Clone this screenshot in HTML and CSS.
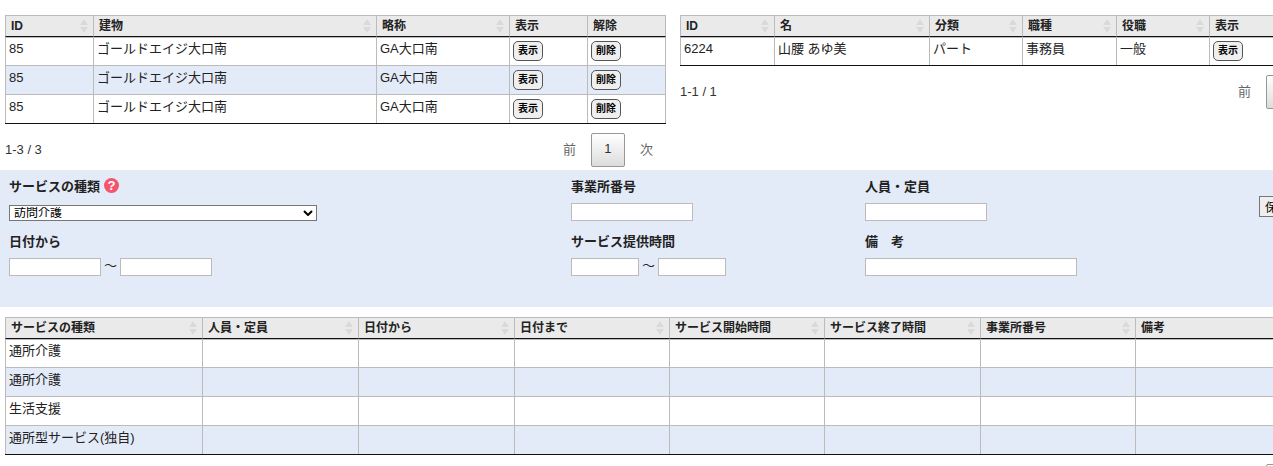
FILE: index.html
```html
<!DOCTYPE html>
<html lang="ja">
<head>
    <meta charset="UTF-8">
    <meta name="viewport" content="width=device-width, initial-scale=1.0">
    <title>サービス登録</title>
    <link rel="stylesheet" href="styles.css">
</head>
<body>

<svg class="sprite" aria-hidden="true">
    <symbol id="sort" viewBox="0 0 8 14">
        <path d="M4 0 L8 6 H0 Z M0 8 H8 L4 14 Z"/>
    </symbol>
</svg>

<div class="page">
    <div class="panes">
        <!-- 建物一覧 -->
        <div class="pane">
            <table class="list building-list">
                <thead>
                    <tr>
                        <th class="col-id"><div class="head">ID<svg class="sort"><use href="#sort"/></svg></div></th>
                        <th class="col-building"><div class="head">建物<svg class="sort"><use href="#sort"/></svg></div></th>
                        <th class="col-short"><div class="head">略称<svg class="sort"><use href="#sort"/></svg></div></th>
                        <th class="col-show"><div class="head">表示</div></th>
                        <th class="col-remove"><div class="head">解除</div></th>
                    </tr>
                </thead>
                <tbody>
                    <tr>
                        <td>85</td>
                        <td>ゴールドエイジ大口南</td>
                        <td>GA大口南</td>
                        <td><button type="button" class="btn">表示</button></td>
                        <td><button type="button" class="btn">削除</button></td>
                    </tr>
                    <tr>
                        <td>85</td>
                        <td>ゴールドエイジ大口南</td>
                        <td>GA大口南</td>
                        <td><button type="button" class="btn">表示</button></td>
                        <td><button type="button" class="btn">削除</button></td>
                    </tr>
                    <tr>
                        <td>85</td>
                        <td>ゴールドエイジ大口南</td>
                        <td>GA大口南</td>
                        <td><button type="button" class="btn">表示</button></td>
                        <td><button type="button" class="btn">削除</button></td>
                    </tr>
                </tbody>
            </table>
            <div class="pager">
                <span class="pager-info">1-3 / 3</span>
                <button type="button" class="page-btn">前</button>
                <button type="button" class="page-btn current">1</button>
                <button type="button" class="page-btn">次</button>
            </div>
        </div>

        <!-- 職員一覧 -->
        <div class="pane">
            <table class="list staff-list">
                <thead>
                    <tr>
                        <th class="col-id"><div class="head">ID<svg class="sort"><use href="#sort"/></svg></div></th>
                        <th class="col-name"><div class="head">名<svg class="sort"><use href="#sort"/></svg></div></th>
                        <th class="col-class"><div class="head">分類<svg class="sort"><use href="#sort"/></svg></div></th>
                        <th class="col-job"><div class="head">職種<svg class="sort"><use href="#sort"/></svg></div></th>
                        <th class="col-post"><div class="head">役職<svg class="sort"><use href="#sort"/></svg></div></th>
                        <th class="col-show"><div class="head">表示</div></th>
                    </tr>
                </thead>
                <tbody>
                    <tr>
                        <td>6224</td>
                        <td>山腰 あゆ美</td>
                        <td>パート</td>
                        <td>事務員</td>
                        <td>一般</td>
                        <td><button type="button" class="btn">表示</button></td>
                    </tr>
                </tbody>
            </table>
            <div class="pager">
                <span class="pager-info">1-1 / 1</span>
                <button type="button" class="page-btn">前</button>
                <button type="button" class="page-btn current">1</button>
                <button type="button" class="page-btn">次</button>
            </div>
        </div>
    </div>

    <!-- 入力フォーム -->
    <form class="service-form">
        <div class="field">
            <div class="label-row">
                <label for="service_type">サービスの種類</label>
                <svg class="help" viewBox="0 0 16 16" role="img" aria-label="ヘルプ">
                    <circle cx="8" cy="8" r="8"/>
                    <text x="8" y="13" text-anchor="middle">?</text>
                </svg>
            </div>
            <div class="control">
                <div class="select-box">
                    <select id="service_type" class="service-type">
                        <option>訪問介護</option>
                        <option>通所介護</option>
                        <option>生活支援</option>
                    </select>
                    <svg class="arrow" viewBox="0 0 10 6" aria-hidden="true"><path d="M1 1 L5 5 L9 1"/></svg>
                </div>
            </div>
        </div>
        <div class="field">
            <div class="label-row"><label for="office_no">事業所番号</label></div>
            <div class="control"><input type="text" id="office_no" class="w-medium"></div>
        </div>
        <div class="field">
            <div class="label-row"><label for="capacity">人員・定員</label></div>
            <div class="control"><input type="text" id="capacity" class="w-medium"></div>
        </div>
        <div class="save">
            <button type="submit" class="save-btn">保存</button>
        </div>
        <div class="field">
            <div class="label-row"><label for="date_from">日付から</label></div>
            <div class="control">
                <input type="text" id="date_from" class="w-date">
                <span>～</span>
                <input type="text" id="date_to" class="w-date" aria-label="日付まで">
            </div>
        </div>
        <div class="field">
            <div class="label-row"><label for="time_from">サービス提供時間</label></div>
            <div class="control">
                <input type="text" id="time_from" class="w-time">
                <span>～</span>
                <input type="text" id="time_to" class="w-time" aria-label="サービス終了時間">
            </div>
        </div>
        <div class="field">
            <div class="label-row"><label for="note">備　考</label></div>
            <div class="control"><input type="text" id="note" class="w-note"></div>
        </div>
    </form>

    <!-- サービス一覧 -->
    <div class="services">
        <table class="list service-list">
            <thead>
                <tr>
                    <th class="col-type"><div class="head">サービスの種類<svg class="sort"><use href="#sort"/></svg></div></th>
                    <th class="col-std"><div class="head">人員・定員<svg class="sort"><use href="#sort"/></svg></div></th>
                    <th class="col-std"><div class="head">日付から<svg class="sort"><use href="#sort"/></svg></div></th>
                    <th class="col-time"><div class="head">日付まで<svg class="sort"><use href="#sort"/></svg></div></th>
                    <th class="col-time"><div class="head">サービス開始時間<svg class="sort"><use href="#sort"/></svg></div></th>
                    <th class="col-std"><div class="head">サービス終了時間<svg class="sort"><use href="#sort"/></svg></div></th>
                    <th class="col-time"><div class="head">事業所番号<svg class="sort"><use href="#sort"/></svg></div></th>
                    <th class="col-note"><div class="head">備考<svg class="sort"><use href="#sort"/></svg></div></th>
                </tr>
            </thead>
            <tbody>
                <tr><td>通所介護</td><td></td><td></td><td></td><td></td><td></td><td></td><td></td></tr>
                <tr><td>通所介護</td><td></td><td></td><td></td><td></td><td></td><td></td><td></td></tr>
                <tr><td>生活支援</td><td></td><td></td><td></td><td></td><td></td><td></td><td></td></tr>
                <tr><td>通所型サービス(独自)</td><td></td><td></td><td></td><td></td><td></td><td></td><td></td></tr>
            </tbody>
        </table>
        <div class="pager">
            <span class="pager-info">1-4 / 4</span>
            <button type="button" class="page-btn">前</button>
            <button type="button" class="page-btn current">1</button>
            <button type="button" class="page-btn">次</button>
        </div>
    </div>
</div>

</body>
</html>
```

FILE: styles.css
```css
* {
    padding: 0;
    margin: 0;
    box-sizing: border-box;
}

html {
    scrollbar-width: none;
}

body {
    font-family: "Liberation Sans", "Noto Sans CJK JP", sans-serif;
    font-size: 13px;
    line-height: 20px;
    color: #222;
    background-color: #fff;
}

button,
input,
select {
    font-family: inherit;
    font-size: 13px;
}

.sprite {
    display: none;
}

/* 横に長い表なので最小幅を確保する */
.page {
    min-width: 1346px;
}

.panes {
    display: grid;
    grid-template-columns: 1fr 1fr;
    gap: 14px;
    padding: 15px 5px 3px;
}

/* 一覧表 */
.list {
    width: 100%;
    table-layout: fixed;
    border-collapse: separate;
    border-spacing: 0;
    border-bottom: 1px solid #111;
}

.list th {
    height: 22px;
    padding: 0 5px;
    border-top: 1px solid #bbb;
    border-left: 1px solid #bbb;
    border-bottom: 1px solid #111;
    background-color: #eaeaea;
    font-size: 12px;
    line-height: 20px;
    text-align: left;
}

.list td {
    height: 29px;
    padding: 2px 3px;
    border-top: 1px solid #bbb;
    border-left: 1px solid #bbb;
    vertical-align: top;
}

.list th:last-child,
.list td:last-child {
    border-right: 1px solid #bbb;
}

.list tbody tr:first-child td {
    height: 28px;
    border-top: none;
    box-shadow: inset 0 1px 0 #bbb;
}

.list tbody tr:nth-child(even) {
    background-color: #e4ebf8;
}

.head {
    display: flex;
    justify-content: space-between;
    align-items: center;
}

.sort {
    width: 8px;
    height: 14px;
    fill: #dadada;
}

.building-list .col-id { width: 88px; }
.building-list .col-building { width: 283px; }
.building-list .col-short { width: 133px; }
.building-list .col-show { width: 78px; }
.building-list .col-remove { width: 79px; }

.staff-list .col-id { width: 94px; }
.staff-list .col-name { width: 155px; }
.staff-list .col-class { width: 93px; }
.staff-list .col-job { width: 94px; }
.staff-list .col-post { width: 93px; }
.staff-list .col-show { width: 132px; }

.service-list .col-type { width: 197px; }
.service-list .col-std { width: 156px; }
.service-list .col-time { width: 155px; }
.service-list .col-note { width: 206px; }

.btn {
    display: block;
    height: 20px;
    margin-top: 2px;
    padding: 0 4px;
    border: 1px solid #555;
    border-radius: 5px;
    background-color: #efefef;
    color: #000;
    font-size: 10px;
    font-weight: bold;
    line-height: 18px;
}

/* ページ送り */
.pager {
    display: flex;
    align-items: center;
    gap: 2px;
    margin-top: 9px;
}

.pager-info {
    margin-right: auto;
    color: #333;
}

.page-btn {
    min-width: 34px;
    height: 34px;
    padding: 0 12px 3px;
    border: 1px solid transparent;
    border-radius: 2px;
    background: none;
    color: #666;
}

.page-btn.current {
    border-color: #979797;
    background: linear-gradient(#fff, #dcdcdc);
    color: #333;
}

/* 入力フォーム */
.service-form {
    display: grid;
    grid-template-columns: 562px 294px 394px 1fr;
    row-gap: 11px;
    padding: 7px 0 31px 9px;
    background-color: #e4ebf8;
}

.label-row {
    display: flex;
    gap: 4px;
    height: 20px;
    margin-bottom: 6px;
    font-weight: bold;
}

.help {
    width: 15px;
    height: 15px;
    margin-top: 1px;
    fill: #f4546c;
}

.help text {
    fill: #fff;
    font-size: 14px;
    font-weight: bold;
}

.control {
    display: flex;
    align-items: flex-end;
    gap: 3px;
    height: 18px;
}

.service-form input {
    height: 18px;
    border: 1px solid #bbb;
    background-color: #fff;
}

.select-box {
    display: flex;
    position: relative;
}

.service-type {
    width: 308px;
    height: 16px;
    padding: 0 20px 0 4px;
    border: 1px solid #767676;
    background-color: #fff;
    color: #000;
    font-size: 12px;
    line-height: 13px;
    appearance: none;
}

.arrow {
    position: absolute;
    top: 5px;
    right: 4px;
    width: 10px;
    height: 6px;
    fill: none;
    stroke: #000;
    stroke-width: 2;
    pointer-events: none;
}

.w-medium { width: 122px; }
.w-date { width: 92px; }
.w-time { width: 68px; }
.w-note { width: 212px; }

.save {
    padding-top: 19px;
}

.save-btn {
    height: 21px;
    padding: 0 5px;
    border: 1px solid #767676;
    background-color: #efefef;
    color: #000;
    font-size: 12px;
}

.services {
    padding: 10px 5px;
}
```
